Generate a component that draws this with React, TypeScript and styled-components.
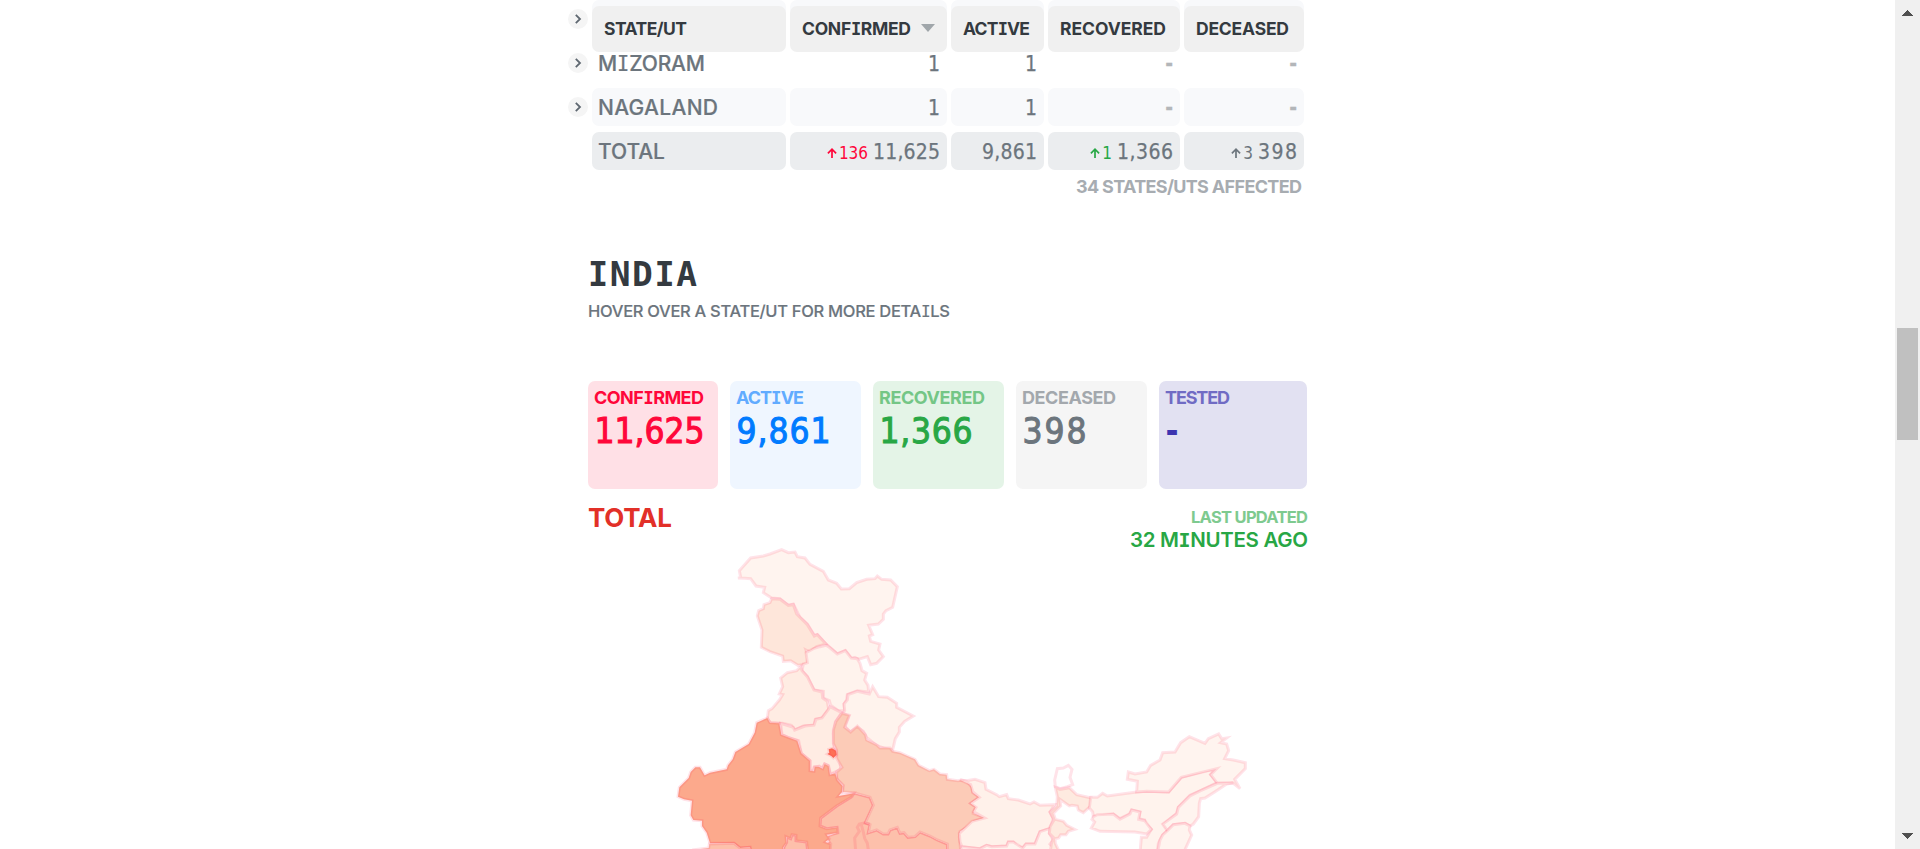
import React, { useLayoutEffect, useRef, useState } from "react";
import styled, { createGlobalStyle } from "styled-components";

const GlobalStyle = createGlobalStyle`
  * { box-sizing: border-box; }
  body {
    margin: 0;
    background: #fff;
    font-family: Inter, "Liberation Sans", sans-serif;
    overflow: hidden;
  }
`;

const NUM = `"DejaVu Sans Condensed", "DejaVu Sans", sans-serif`;

/* Text tracked so that the word fills a given measure. */
const FitSpan = styled.span`
  display: inline-block;
  white-space: nowrap;
`;

/* The capital I carries slab serifs. */
const SlabI = styled.span`
  font-family: "DejaVu Sans Mono", monospace;
  font-size: 0.97em;
  line-height: 1px;
`;

function Fit({ w, children }: { w: number; children: string }) {
  const ref = useRef<HTMLSpanElement>(null);
  const [spacing, setSpacing] = useState(0);
  useLayoutEffect(() => {
    const el = ref.current;
    if (el && children.length > 1) {
      setSpacing((w - el.getBoundingClientRect().width) / (children.length - 1));
    }
  }, [w, children]);
  return (
    <FitSpan ref={ref} style={{ letterSpacing: spacing, marginRight: -spacing }}>
      {children.split(/(I)/).map((part, i) => (part === "I" ? <SlabI key={i}>I</SlabI> : part))}
    </FitSpan>
  );
}

const Screen = styled.div`
  display: flex;
  width: 1920px;
  height: 849px;
  overflow: hidden;
`;

const Main = styled.main`
  flex: 1;
  height: 849px;
  overflow: hidden;
  padding-left: 588px;
`;

const Column = styled.div`
  width: 720px;
`;

const Table = styled.section`
  position: relative;
  display: flex;
  flex-direction: column;
  gap: 6px;
  margin-left: -20px;
`;

const Row = styled.div`
  display: grid;
  grid-template-columns: 20px 194px 157px 93px 132px 120px;
  column-gap: 4px;
  height: 38px;
`;

const HeaderRow = styled(Row)`
  position: absolute;
  top: 6px;
  left: 0;
  height: 46px;
`;

const HeaderCell = styled.div`
  display: flex;
  align-items: center;
  justify-content: flex-start;
  gap: 10px;
  padding: 0 0 2px 12px;
  border-radius: 7px;
  background: #f0f0f0;
  color: #343a40;
  font-size: 17.5px;
  font-weight: 700;
`;

const Cell = styled.div<{ $bg: string; $left?: boolean }>`
  display: flex;
  align-items: center;
  justify-content: ${(p) => (p.$left ? "flex-start" : "flex-end")};
  gap: 5px;
  padding: ${(p) => (p.$left ? "1px 6px 0" : "2px 7px 0")};
  border-radius: 7px;
  background: ${(p) => p.$bg};
  color: #6c757d;
  font-family: ${(p) => (p.$left ? "inherit" : NUM)};
  font-stretch: ${(p) => (p.$left ? "normal" : "condensed")};
  font-size: 21px;
  font-weight: ${(p) => (p.$left ? 500 : 400)};
  -webkit-text-stroke: ${(p) => (p.$left ? "0.2px currentColor" : "0.25px currentColor")};
`;

const Dash = styled.span`
  color: #b3b6b9;
  font-weight: 700;
`;

const Delta = styled.span<{ $color: string }>`
  display: flex;
  align-items: center;
  gap: 2px;
  padding-top: 2px;
  color: ${(p) => p.$color};
  font-size: 17px;
  -webkit-text-stroke: 0;
`;

const Chevron = styled.span`
  display: flex;
  align-items: center;
  justify-content: center;
  width: 20px;
  height: 20px;
  margin-top: 8.5px;
  border-radius: 50%;
  background: #f5f5f5;
`;

const Affected = styled.div`
  display: flex;
  justify-content: flex-end;
  margin: 7px 6px 0 0;
  line-height: 19px;
  font-size: 18px;
  font-weight: 700;
  color: #a7acb1;
`;

const Title = styled.h1`
  margin: 58px 0 0;
  line-height: 40px;
  font-family: "DejaVu Sans Mono", monospace;
  font-size: 34.5px;
  font-weight: 700;
  color: #343a40;
`;

const Subtitle = styled.h2`
  margin: 7px 0 0;
  line-height: 20px;
  font-size: 16.5px;
  font-weight: 500;
  color: #6c757d;
  -webkit-text-stroke: 0.15px currentColor;
`;

const Cards = styled.div`
  display: grid;
  grid-template-columns: 130px 131px 131px 131px 148px;
  column-gap: 12px;
  margin-top: 60px;
`;

const Card = styled.div<{ $bg: string }>`
  height: 108px;
  padding: 7px 0 0 6px;
  border-radius: 7px;
  background: ${(p) => p.$bg};
`;

const CardLabel = styled.div<{ $color: string }>`
  height: 20px;
  line-height: 20px;
  font-size: 18px;
  font-weight: 700;
  color: ${(p) => p.$color};
`;

const CardValue = styled.div<{ $color: string; $bold?: boolean }>`
  margin-top: 3px;
  padding-left: 0.5px;
  line-height: 40px;
  font-family: ${NUM};
  font-stretch: condensed;
  font-size: 35px;
  font-weight: ${(p) => (p.$bold ? 700 : 400)};
  color: ${(p) => p.$color};
  -webkit-text-stroke: ${(p) => (p.$bold ? "0" : "1px currentColor")};
`;

const MapHeader = styled.div`
  display: flex;
  justify-content: space-between;
  height: 51px;
`;

const MapTitle = styled.div`
  padding-top: 14px;
  line-height: 29px;
  font-size: 26px;
  font-weight: 700;
  color: #e23028;
`;

const Updated = styled.div`
  display: flex;
  flex-direction: column;
  align-items: flex-end;
  padding-top: 18px;
`;

const UpdatedLabel = styled.div`
  line-height: 20px;
  font-size: 16.5px;
  font-weight: 700;
  color: #7eca8f;
`;

const UpdatedTime = styled.div`
  margin-top: 1px;
  line-height: 23px;
  font-size: 20.5px;
  font-weight: 600;
  color: #28a745;
`;

const MapSvg = styled.svg`
  display: block;
`;

const Scrollbar = styled.aside`
  display: flex;
  flex-direction: column;
  align-items: center;
  justify-content: space-between;
  width: 25px;
  height: 849px;
  padding: 10px 0;
  background: #f0f0f0;
`;

const Thumb = styled.div`
  width: 21px;
  height: 112px;
  margin: 312px 0 auto;
  background: #c0c0c0;
`;

const ScrollArrow = ({ down }: { down?: boolean }) => (
  <svg width="11" height="6" viewBox="0 0 11 6" shapeRendering="crispEdges">
    <path d={down ? "M0 0H11L5.5 6Z" : "M0 6H11L5.5 0Z"} fill="#505050" />
  </svg>
);

const ChevronIcon = () => (
  <Chevron>
    <svg width="10" height="12" viewBox="0 0 10 12">
      <path d="M2.8 1.8L7 6L2.8 10.2" fill="none" stroke="#5f6871" strokeWidth="1.8" />
    </svg>
  </Chevron>
);

const ArrowUp = () => (
  <svg width="10" height="11" viewBox="0 0 10 11">
    <path d="M5 10V1.4M0.9 5.3L5 1.2L9.1 5.3" fill="none" stroke="currentColor" strokeWidth="1.7" />
  </svg>
);

type Shape = { at: [number, number]; fill: string; pts: string };

/* Outlines are in thirds of a pixel, relative to each sheet's own origin. */
const SHAPES: Shape[] = [
  { at: [720, 540], fill: "#fff4ef", pts: "54,114 62,112 58,92 92,54 130,48 150,42 185,29 205,38 225,36 232,50 255,54 270,73 310,94 325,120 350,130 364,147 388,146 410,128 440,118 465,116 472,108 485,118 512,120 532,140 518,202 498,212 490,222 490,238 475,252 446,256 458,284 448,288 452,304 480,312 476,330 490,350 470,370 452,374 442,350 415,358 405,352 394,356 376,332 352,342 318,312 292,284 283,286 262,252 240,232 220,192 205,196 180,176 155,174 130,158 134,142 108,138 92,116 75,115" },
  { at: [720, 540], fill: "#fee6da", pts: "155,176 180,178 205,196 220,194 230,222 262,254 283,288 292,284 318,312 290,320 270,336 258,330 266,352 262,372 234,376 212,362 190,364 188,348 150,335 124,322 126,270 112,228 116,212 130,206 132,194 150,188" },
  { at: [770, 640], fill: "#fff3ed", pts: "168,16 178,22 202,42 226,32 244,54 262,56 270,70 276,92 290,100 284,120 294,136 296,156 262,152 232,164 230,180 222,192 224,212 205,212 182,196 178,182 160,174 160,154 132,150 112,110 96,92 100,72 112,68 108,38 130,26 150,20" },
  { at: [770, 640], fill: "#ffece3", pts: "92,80 96,92 112,110 132,150 156,156 158,174 172,184 176,208 156,234 136,238 132,256 100,258 74,270 64,256 38,250 28,250 2,248 -8,236 -5,212 6,206 28,180 38,164 28,162 38,140 32,114 52,98 80,92" },
  { at: [770, 640], fill: "#fff3ed", pts: "224,212 222,192 232,180 234,164 262,154 298,162 308,140 326,170 352,172 380,190 380,202 430,228 404,244 388,262 388,276 376,296 368,330 340,324 320,316 290,292 280,274 262,262 240,276 224,258 236,228 218,220" },
  { at: [660, 690], fill: "#ffece3", pts: "362,100 400,112 404,120 435,108 462,105 468,88 486,84 505,58 510,50 545,68 526,96 520,130 522,172 530,190 540,215 542,238 512,252 504,226 494,222 488,234 478,228 462,232 458,244 450,242 450,212 424,190 416,152 384,142 366,134" },
  { at: [820, 690], fill: "#fdc0ab", pts: "102,310 150,322 160,346 136,398 150,404 145,428 170,420 190,432 204,432 210,420 232,412 240,430 252,428 264,442 285,440 300,426 330,438 352,450 382,462 384,500 -110,500 -108,472 -100,456 -100,440 -88,446 -84,434 -72,436 -72,452 -40,456 -35,500 30,500 18,462 28,456 20,440 52,428 50,412 20,416 0,408 2,384 50,348 92,322" },
  { at: [820, 690], fill: "#fccbb7", pts: "66,70 88,76 74,112 92,126 112,108 136,134 140,150 170,165 180,174 210,174 218,184 240,188 262,198 285,208 296,226 328,242 342,238 360,252 380,254 382,268 414,272 424,270 440,274 456,292 458,308 478,322 452,340 468,350 460,370 494,384 462,394 448,408 420,424 418,440 424,500 384,500 382,462 352,450 330,438 300,426 285,440 264,442 252,428 240,430 232,412 210,420 204,432 190,432 170,420 145,428 150,404 136,398 160,346 150,322 102,308 68,306 70,286 50,266 50,246 66,232 50,205 50,180 40,160 40,120 48,94" },
  { at: [660, 690], fill: "#fca98c", pts: "322,84 290,98 284,128 266,162 226,186 218,208 204,226 200,238 150,248 134,256 120,232 106,232 92,246 86,264 58,292 54,320 72,328 96,332 92,376 100,390 126,392 126,408 140,428 150,460 222,460 240,474 270,472 275,500 372,500 370,472 380,458 378,440 392,446 396,434 408,436 408,452 440,456 445,500 510,500 512,462 496,456 508,446 500,434 534,428 532,412 500,416 480,408 482,384 530,348 576,320 582,310 536,318 546,306 548,288 532,270 526,250 510,254 506,228 494,222 488,236 476,230 464,230 462,244 450,242 450,212 424,190 412,152 384,142 364,134 358,100 330,98" },
  { at: [660, 690], fill: "#fdc0ab", pts: "148,462 222,460 240,474 270,472 275,500 120,500 104,479 146,474" },
  { at: [660, 690], fill: "#fd7056", pts: "506,178 516,175 528,182 530,194 520,204 514,198 502,192 508,188" },
  { at: [960, 720], fill: "#fff1ea", pts: "0,180 20,182 45,178 75,188 78,208 110,224 118,230 140,224 145,236 175,240 210,252 222,246 240,256 284,254 270,276 280,296 270,325 240,335 225,372 198,372 188,384 170,378 160,366 145,366 140,378 95,380 80,376 60,386 6,380 0,366 -2,340 36,304 74,294 40,275 48,262 32,250 58,232 38,215 32,194" },
  { at: [960, 720], fill: "#fff4ef", pts: "6,380 60,386 80,376 95,380 140,378 145,366 160,366 188,384 198,372 225,372 240,335 270,325 268,340 280,360 270,372 300,400 0,400" },
  { at: [960, 720], fill: "#ffffff", pts: "286,200 284,180 292,146 310,144 325,136 336,148 330,172 338,194 322,200 300,206" },
  { at: [960, 720], fill: "#feeae0", pts: "286,202 300,208 328,203 350,224 394,234 392,258 370,278 355,270 352,258 336,256 328,258 300,238 302,258 280,280 286,298 310,304 320,316 344,328 325,334 318,344 302,344 296,354 285,356 286,370 300,400 270,400 274,372 280,352 268,340 270,320 282,300 270,276 290,258 292,230" },
  { at: [960, 720], fill: "#fff3ed", pts: "392,232 412,232 428,220 442,228 530,216 560,214 626,216 664,172 730,154 770,146 752,164 772,188 722,212 690,226 655,262 650,280 612,312 625,330 608,345 595,370 592,400 540,400 544,352 560,352 574,328 556,310 554,300 536,296 540,276 515,270 508,282 480,296 460,282 400,290 398,276 388,264" },
  { at: [960, 720], fill: "#fff4ef", pts: "400,290 412,284 460,282 480,298 510,282 515,270 540,276 536,298 554,302 574,328 560,342 525,336 420,334 394,324 404,306 396,298" },
  { at: [960, 720], fill: "#fff4ef", pts: "530,216 532,184 502,178 505,156 525,162 560,156 572,136 600,120 608,98 645,96 662,68 688,50 735,70 745,56 776,42 785,56 800,54 782,68 800,72 806,92 794,116 820,120 856,128 856,146 824,178 840,206 820,190 772,190 752,164 770,146 664,172 626,216 560,214" },
  { at: [960, 720], fill: "#fff4ef", pts: "722,212 772,190 820,188 800,192 765,215 735,234 722,236 718,250 716,290 700,312 690,318 675,310 640,314 622,332 608,312 650,282 655,262 690,228" },
  { at: [960, 720], fill: "#fff4ef", pts: "622,332 640,314 675,310 690,318 688,330 695,345 670,400 592,400 600,360 608,345" },
];

const StateMap = () => (
  <MapSvg width="720" height="309" viewBox="588 540 720 309">
    {SHAPES.map((s, i) => (
      <g key={i} transform={`translate(${s.at[0]} ${s.at[1]}) scale(0.33333)`}>
        <polygon points={s.pts} fill={s.fill} stroke="rgba(255,7,58,0.115)" strokeWidth="9" />
      </g>
    ))}
    <g transform="translate(820 690) scale(0.33333)" fill="none" stroke="rgba(255,7,58,0.115)" strokeWidth="9">
      <path d="M136 398L118 402L112 412L118 424L104 444L108 500M124 404L130 426L134 445L142 460L148 500M150 402L134 400" />
    </g>
  </MapSvg>
);

const STRIPE = "#f8f9fb";
const TOTAL_BG = "#ebedef";

const CARDS = [
  { label: "CONFIRMED", lw: 110, value: "11,625", vw: 110, bg: "#ffe0e6", lc: "#ff073a", vc: "#ff073a" },
  { label: "ACTIVE", lw: 68, value: "9,861", vw: 94, bg: "#eff6ff", lc: "#61abff", vc: "#007bff" },
  { label: "RECOVERED", lw: 106, value: "1,366", vw: 93, bg: "#e4f4e7", lc: "#74c686", vc: "#28a745" },
  { label: "DECEASED", lw: 94, value: "398", vw: 64, bg: "#f5f5f5", lc: "#a3a8ad", vc: "#6c757d" },
  { label: "TESTED", lw: 65, value: "-", vw: 12, bg: "#e2e1f2", lc: "#706bc4", vc: "#3d35b0" },
];

export default function App() {
  return (
    <>
      <GlobalStyle />
      <Screen>
        <Main>
          <Column>
            <Table>
              <Row>
                <ChevronIcon />
                <Cell $bg={STRIPE} $left />
                <Cell $bg={STRIPE} />
                <Cell $bg={STRIPE} />
                <Cell $bg={STRIPE} />
                <Cell $bg={STRIPE} />
              </Row>
              {[
                { name: "MIZORAM", w: 107, bg: "#ffffff" },
                { name: "NAGALAND", w: 120, bg: STRIPE },
              ].map((r) => (
                <Row key={r.name}>
                  <ChevronIcon />
                  <Cell $bg={r.bg} $left><Fit w={r.w}>{r.name}</Fit></Cell>
                  <Cell $bg={r.bg}>1</Cell>
                  <Cell $bg={r.bg}>1</Cell>
                  <Cell $bg={r.bg}><Dash>-</Dash></Cell>
                  <Cell $bg={r.bg}><Dash>-</Dash></Cell>
                </Row>
              ))}
              <Row>
                <span />
                <Cell $bg={TOTAL_BG} $left><Fit w={67}>TOTAL</Fit></Cell>
                <Cell $bg={TOTAL_BG}>
                  <Delta $color="#ff073a"><ArrowUp /><Fit w={29}>136</Fit></Delta>
                  <Fit w={67}>11,625</Fit>
                </Cell>
                <Cell $bg={TOTAL_BG}><Fit w={55}>9,861</Fit></Cell>
                <Cell $bg={TOTAL_BG}>
                  <Delta $color="#28a745"><ArrowUp />1</Delta>
                  <Fit w={56}>1,366</Fit>
                </Cell>
                <Cell $bg={TOTAL_BG}>
                  <Delta $color="#6c757d"><ArrowUp />3</Delta>
                  <Fit w={39}>398</Fit>
                </Cell>
              </Row>
              <HeaderRow>
                <span />
                <HeaderCell><Fit w={83}>STATE/UT</Fit></HeaderCell>
                <HeaderCell>
                  <Fit w={109}>CONFIRMED</Fit>
                  <svg width="14" height="8" viewBox="0 0 14 8">
                    <path d="M0 0H14L7 8Z" fill="#a0a6aa" />
                  </svg>
                </HeaderCell>
                <HeaderCell><Fit w={67}>ACTIVE</Fit></HeaderCell>
                <HeaderCell><Fit w={106}>RECOVERED</Fit></HeaderCell>
                <HeaderCell><Fit w={93}>DECEASED</Fit></HeaderCell>
              </HeaderRow>
            </Table>
            <Affected><Fit w={226}>34 STATES/UTS AFFECTED</Fit></Affected>
            <Title><Fit w={109}>INDIA</Fit></Title>
            <Subtitle><Fit w={362}>HOVER OVER A STATE/UT FOR MORE DETAILS</Fit></Subtitle>
            <Cards>
              {CARDS.map((c) => (
                <Card key={c.label} $bg={c.bg}>
                  <CardLabel $color={c.lc}><Fit w={c.lw}>{c.label}</Fit></CardLabel>
                  <CardValue $color={c.vc} $bold={c.value === "-"}><Fit w={c.vw}>{c.value}</Fit></CardValue>
                </Card>
              ))}
            </Cards>
            <MapHeader>
              <MapTitle><Fit w={84}>TOTAL</Fit></MapTitle>
              <Updated>
                <UpdatedLabel><Fit w={117}>LAST UPDATED</Fit></UpdatedLabel>
                <UpdatedTime><Fit w={178}>32 MINUTES AGO</Fit></UpdatedTime>
              </Updated>
            </MapHeader>
            <StateMap />
          </Column>
        </Main>
        <Scrollbar>
          <ScrollArrow />
          <Thumb />
          <ScrollArrow down />
        </Scrollbar>
      </Screen>
    </>
  );
}
